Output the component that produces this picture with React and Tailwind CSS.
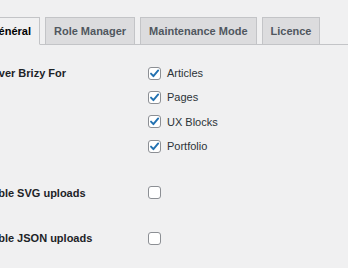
import React from 'react';

const tabs = ['Général', 'Role Manager', 'Maintenance Mode', 'Licence'];
const postTypes = ['Articles', 'Pages', 'UX Blocks', 'Portfolio'];

const Box = ({ checked }) => (
    <span className="flex h-[13px] w-[13px] shrink-0 items-center justify-center rounded-[3px] border border-[#8c8f94] bg-white">
        {checked && (
            <svg width="11" height="11" viewBox="0 0 11 11" fill="none">
                <path d="M2 5.6 L4.4 8.2 L9.2 2.4" stroke="#2271b1" strokeWidth="1.9" strokeLinecap="round" strokeLinejoin="round" />
            </svg>
        )}
    </span>
);

const Row = ({ label, className, children }) => (
    <div className={`grid grid-cols-[170px_1fr] ${className}`}>
        <div className="flex h-[24.4px] items-center text-[11px] font-bold text-[#1d2327]">{label}</div>
        <div>{children}</div>
    </div>
);

export default function App() {
    return (
        <div className="h-[268px] w-[348px] overflow-hidden bg-[#f0f0f1]" style={{ fontFamily: '"Liberation Sans", Arial, sans-serif' }}>
            <div className="ml-[-22px]">
                {/* Tab bar */}
                <div className="mt-[17px] flex items-end border-b border-[#c3c4c7] pl-[3px]">
                    {tabs.map((t, i) => (
                        <div
                            key={t}
                            className={`mb-[-1px] border border-[#c3c4c7] px-2 py-1 text-[11px] font-bold leading-[18px] ${i > 0 ? 'ml-[5px]' : ''} ${
                                i === 0 ? 'border-b-[#f0f0f1] bg-[#f0f0f1] text-black' : 'bg-[#dcdcde] text-[#50575e]'
                            }`}
                        >
                            {t}
                        </div>
                    ))}
                </div>

                {/* Settings */}
                <Row label="Activer Brizy For" className="mt-[16px]">
                    {postTypes.map(p => (
                        <label key={p} className="flex h-[24.4px] items-center gap-[6px] text-[11px] text-[#2c3338]">
                            <Box checked />
                            {p}
                        </label>
                    ))}
                </Row>
                <Row label="Enable SVG uploads" className="mt-[22px]">
                    <div className="flex h-[24.4px] items-center"><Box /></div>
                </Row>
                <Row label="Enable JSON uploads" className="mt-[21px]">
                    <div className="flex h-[24.4px] items-center"><Box /></div>
                </Row>
            </div>
        </div>
    );
}
